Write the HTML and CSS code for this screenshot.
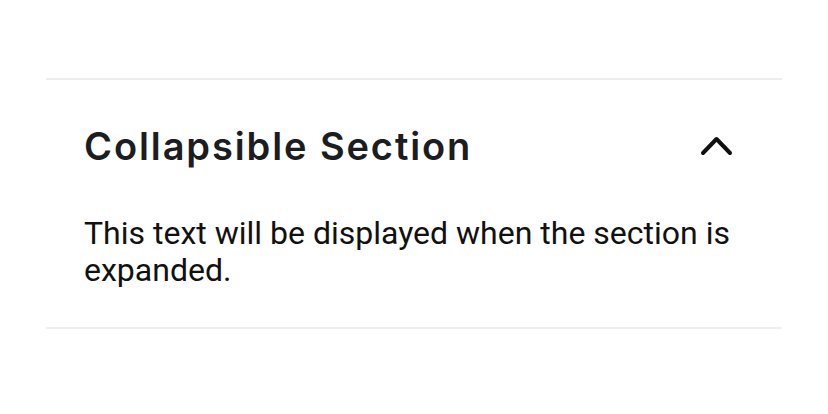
FILE: index.html
```html
<!DOCTYPE html>
<html>
<head>
<meta charset="utf-8">
<link rel="stylesheet" href="styles.css">
</head>
<body>
<div class="page">
  <section class="collapsible">
    <div class="header">
      <h2 class="title">Collapsible Section</h2>
      <svg class="chevron" width="33" height="20" viewBox="0 0 33 20">
        <polyline points="3,17 16.5,3 30,17" fill="none" stroke="#111" stroke-width="4" stroke-linecap="round" stroke-linejoin="round"/>
      </svg>
    </div>
    <p class="content">This text will be displayed when the section is expanded.</p>
  </section>
</div>
</body>
</html>
```
FILE: styles.css
```css
html, body {
  margin: 0;
  padding: 0;
  background: #fff;
}
.page {
  padding: 78px 46px 0 46px;
}
.collapsible {
  border-top: 2px solid #eeeeee;
  border-bottom: 2px solid #eeeeee;
  padding: 0 49px 0 38px;
}
.header {
  display: flex;
  align-items: center;
  justify-content: space-between;
  height: 134px;
  padding-bottom: 2px;
  box-sizing: border-box;
}
.title {
  margin: 0;
  font-family: "Inter", sans-serif;
  font-weight: 600;
  font-size: 38px;
  color: #1a1d21;
  letter-spacing: 1.9px;
}
.chevron {
  display: block;
}
.content {
  margin: 0;
  padding: 1px 0 38px 0;
  font-family: Roboto, sans-serif;
  font-size: 32px;
  line-height: 37px;
  color: #111;
}
```
